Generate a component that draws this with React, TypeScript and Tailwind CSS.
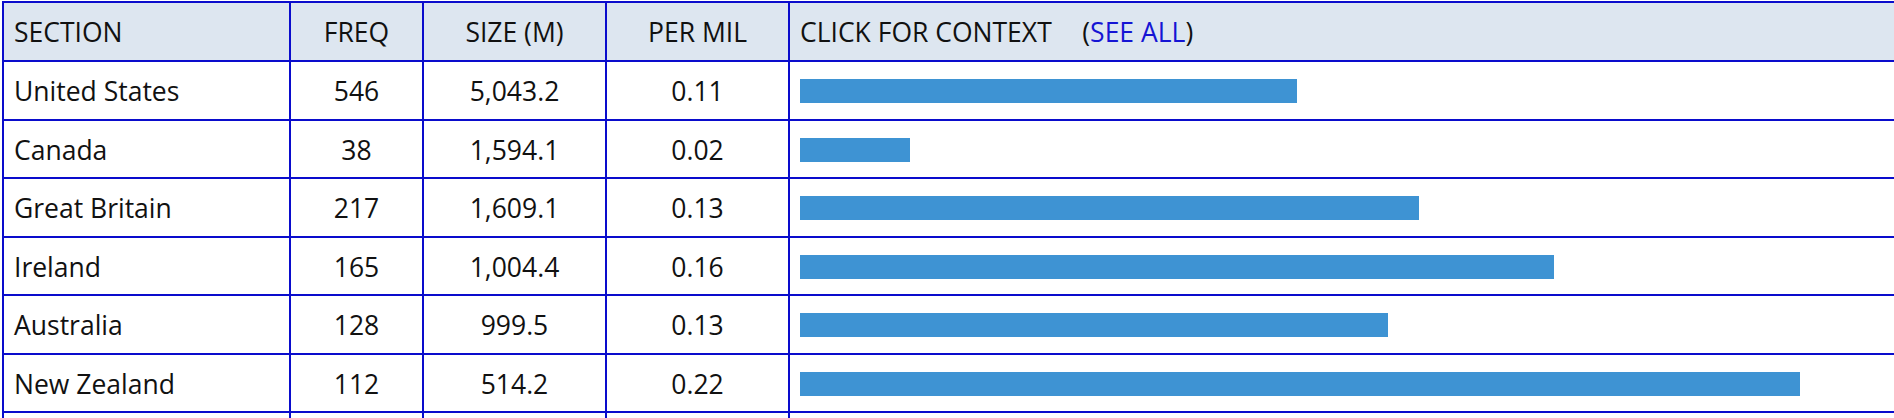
import React from 'react';

const rows = [
  { section: 'United States', freq: '546', size: '5,043.2', perMil: '0.11', bar: 497 },
  { section: 'Canada', freq: '38', size: '1,594.1', perMil: '0.02', bar: 110 },
  { section: 'Great Britain', freq: '217', size: '1,609.1', perMil: '0.13', bar: 619 },
  { section: 'Ireland', freq: '165', size: '1,004.4', perMil: '0.16', bar: 754 },
  { section: 'Australia', freq: '128', size: '999.5', perMil: '0.13', bar: 588 },
  { section: 'New Zealand', freq: '112', size: '514.2', perMil: '0.22', bar: 1000 },
];

const cell = 'border-2 border-[#0a0ccc] px-[10px] pt-[2px] pb-0 align-middle';

const App: React.FC = () => {
  return (
    <div className="w-[1894px] h-[418px] overflow-hidden bg-white">
      <table
        className="table-fixed border-collapse w-[1900px] ml-[2px] mt-[1px] text-[26.5px] leading-none text-[#111]"
        style={{ fontFamily: '"Open Sans", "Noto Sans", sans-serif' }}
      >
        <colgroup>
          <col className="w-[287px]" />
          <col className="w-[133px]" />
          <col className="w-[183px]" />
          <col className="w-[183px]" />
          <col />
        </colgroup>
        <thead>
          <tr className="h-[59px] bg-[#dde6f0]">
            <th className={`${cell} text-left font-normal`}>SECTION</th>
            <th className={`${cell} text-center font-normal`}>FREQ</th>
            <th className={`${cell} text-center font-normal`}>SIZE (M)</th>
            <th className={`${cell} text-center font-normal`}>PER MIL</th>
            <th className={`${cell} text-left font-normal whitespace-pre`}>
              CLICK FOR CONTEXT    <span className="ml-[3px]">(</span><a href="#" className="text-[#1515d4]">SEE ALL</a>)
            </th>
          </tr>
        </thead>
        <tbody>
          {rows.map((r) => (
            <tr key={r.section} className="h-[58.5px]">
              <td className={`${cell} text-left`}>{r.section}</td>
              <td className={`${cell} text-center`}>{r.freq}</td>
              <td className={`${cell} text-center`}>{r.size}</td>
              <td className={`${cell} text-center`}>{r.perMil}</td>
              <td className={`${cell} pt-0`}>
                <div className="h-6 bg-[#3e93d3]" style={{ width: r.bar }} />
              </td>
            </tr>
          ))}
          <tr className="h-[58.5px]">
            <td className={cell}>&nbsp;</td>
            <td className={cell}></td>
            <td className={cell}></td>
            <td className={cell}></td>
            <td className={cell}></td>
          </tr>
        </tbody>
      </table>
    </div>
  );
};

export default App;
